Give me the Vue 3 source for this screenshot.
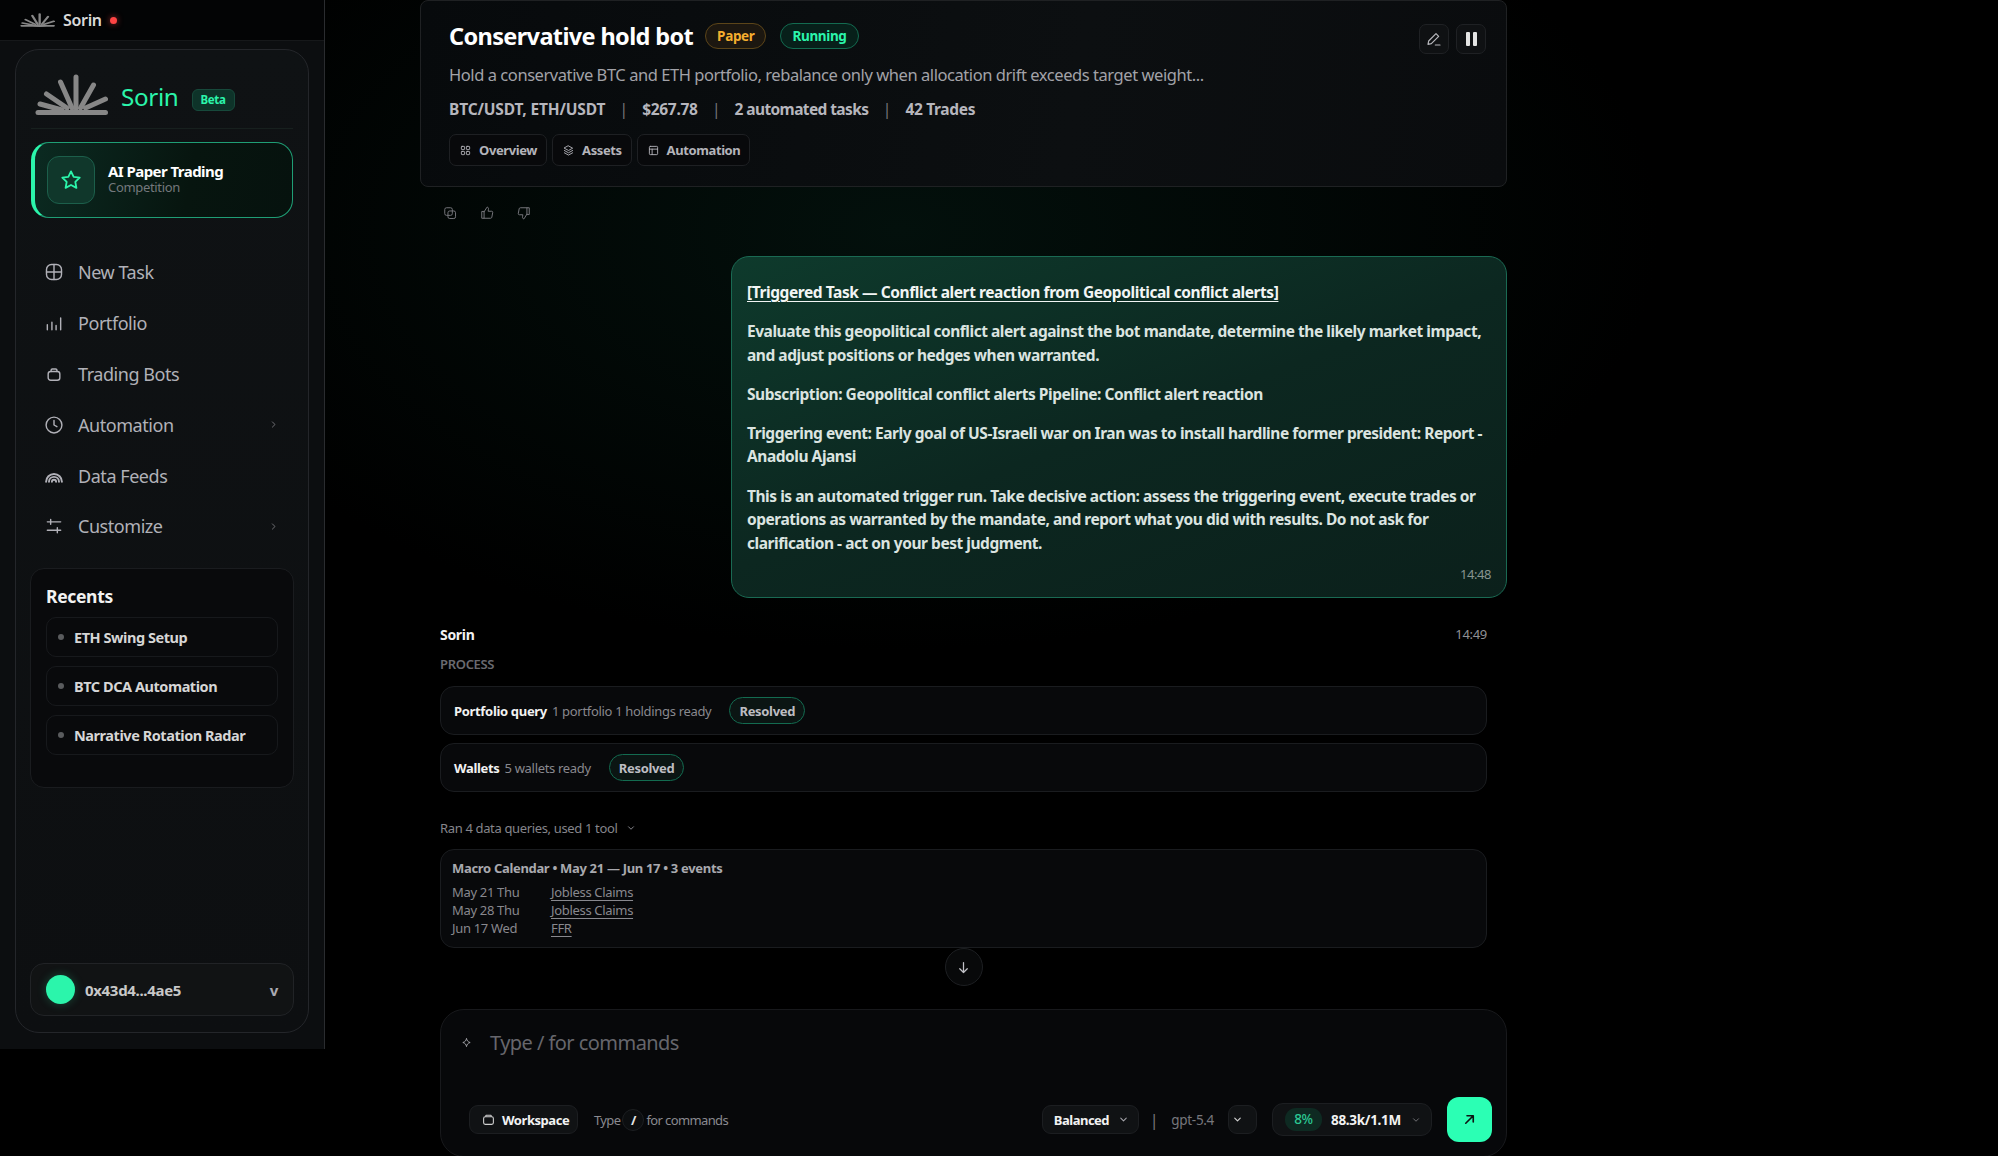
<template>
  <div class="app">
    <aside class="sidebar">
      <div class="topbar">
        <svg class="logo-small" viewBox="0 0 73 42" preserveAspectRatio="none" v-html="logoRays"></svg>
        <span class="topbar-name">Sorin</span>
        <span class="status-dot"></span>
      </div>
      <div class="side-card">
        <div class="brand">
          <svg class="logo" viewBox="0 0 73 42" v-html="logoRays"></svg>
          <span class="brand-name">Sorin</span>
          <span class="beta">Beta</span>
        </div>
        <div class="promo">
          <div class="promo-icon">
            <svg viewBox="0 0 24 24" fill="none" stroke="currentColor" stroke-width="2" stroke-linejoin="round"><path d="M12 2.6l2.9 6 6.6.9-4.8 4.6 1.2 6.5L12 17.5l-5.9 3.1 1.2-6.5L2.500 9.500l6.600-.9z"/></svg>
          </div>
          <div class="promo-text">
            <div class="promo-title">AI Paper Trading</div>
            <div class="promo-sub">Competition</div>
          </div>
        </div>
        <nav class="nav">
          <div v-for="item in navItems" :key="item.label" class="nav-item">
            <svg class="nav-icon" viewBox="0 0 24 24" fill="none" stroke="currentColor" stroke-width="1.7" stroke-linecap="round" stroke-linejoin="round" v-html="item.icon"></svg>
            <span>{{ item.label }}</span>
            <svg v-if="item.arrow" class="nav-arrow" viewBox="0 0 24 24" fill="none" stroke="currentColor" stroke-width="2.4" stroke-linecap="round" stroke-linejoin="round"><path d="M9 5l7 7-7 7"/></svg>
          </div>
        </nav>
        <div class="recents">
          <div class="recents-title">Recents</div>
          <div v-for="r in recents" :key="r" class="recent-item"><i></i>{{ r }}</div>
        </div>
        <div class="wallet">
          <span class="wallet-dot"></span>
          <span class="wallet-addr">0x43d4...4ae5</span>
          <span class="wallet-v">v</span>
        </div>
      </div>
    </aside>

    <main class="main">
      <header class="bot-card">
        <div class="bot-actions">
          <button class="square-btn">
            <svg viewBox="0 0 24 24" fill="none" stroke="currentColor" stroke-width="1.8" stroke-linecap="round" stroke-linejoin="round"><path d="M15 4l4 4L8 19l-5 1 1-5z"/><path d="M14 21h7"/></svg>
          </button>
          <button class="square-btn pause"><i></i><i></i></button>
        </div>
        <div class="bot-title-row">
          <h1>Conservative hold bot</h1>
          <span class="pill paper">Paper</span>
          <span class="pill running">Running</span>
        </div>
        <p class="bot-desc">Hold a conservative BTC and ETH portfolio, rebalance only when allocation drift exceeds target weight...</p>
        <div class="bot-meta">
          <span>BTC/USDT, ETH/USDT</span><b>|</b><span>$267.78</span><b>|</b><span class="meta-tasks">2 automated tasks</span><b>|</b><span>42 Trades</span>
        </div>
        <div class="tabs">
          <div v-for="tab in tabs" :key="tab.label" class="tab">
            <svg viewBox="0 0 24 24" fill="none" stroke="currentColor" stroke-width="2" stroke-linecap="round" stroke-linejoin="round" v-html="tab.icon"></svg>
            {{ tab.label }}
          </div>
        </div>
      </header>

      <div class="msg-actions">
        <svg viewBox="0 0 24 24" fill="none" stroke="currentColor" stroke-width="1.7" stroke-linejoin="round"><rect x="3" y="3" width="13" height="13" rx="3"/><rect x="8.500" y="8.500" width="13" height="13" rx="3"/></svg>
        <svg viewBox="0 0 24 24" fill="none" stroke="currentColor" stroke-width="1.7" stroke-linejoin="round" stroke-linecap="round"><path d="M7 10v11H3V10zM7 10l5-8c2 0 3 1.500 2.500 3.500L14 9h6c1.300 0 2 1 1.800 2.200l-1.500 8c-.2 1-1 1.800-2.100 1.800H7"/></svg>
        <svg viewBox="0 0 24 24" fill="none" stroke="currentColor" stroke-width="1.7" stroke-linejoin="round" stroke-linecap="round"><path d="M17 14V3h4v11zM17 14l-5 8c-2 0-3-1.500-2.500-3.500L10 15H4c-1.300 0-2-1-1.800-2.200l1.500-8C3.900 3.800 4.700 3 5.800 3H17"/></svg>
      </div>

      <section class="user-msg">
        <p class="user-title">[Triggered Task — Conflict alert reaction from Geopolitical conflict alerts]</p>
        <p>Evaluate this geopolitical conflict alert against the bot mandate, determine the likely market impact, and adjust positions or hedges when warranted.</p>
        <p>Subscription: Geopolitical conflict alerts Pipeline: Conflict alert reaction</p>
        <p>Triggering event: Early goal of US-Israeli war on Iran was to install hardline former president: Report - Anadolu Ajansi</p>
        <p>This is an automated trigger run. Take decisive action: assess the triggering event, execute trades or operations as warranted by the mandate, and report what you did with results. Do not ask for clarification - act on your best judgment.</p>
        <div class="user-time">14:48</div>
      </section>

      <section class="reply">
        <div class="reply-head"><strong>Sorin</strong><span>14:49</span></div>
        <div class="process-label">PROCESS</div>
        <div v-for="p in processRows" :key="p.name" class="process-row">
          <strong>{{ p.name }}</strong>
          <span class="process-detail">{{ p.detail }}</span>
          <span class="resolved">Resolved</span>
        </div>
        <div class="ran">
          Ran 4 data queries, used 1 tool
          <svg viewBox="0 0 24 24" fill="none" stroke="currentColor" stroke-width="2.4" stroke-linecap="round" stroke-linejoin="round"><path d="M6 9l6 6 6-6"/></svg>
        </div>
        <div class="macro">
          <div class="macro-title">Macro Calendar • May 21 — Jun 17 • 3 events</div>
          <div v-for="e in events" :key="e.date" class="macro-row">
            <span class="macro-date">{{ e.date }}</span><a>{{ e.name }}</a>
          </div>
        </div>
      </section>

      <div class="scroll-row">
        <button class="scroll-btn">
          <svg viewBox="0 0 24 24" fill="none" stroke="currentColor" stroke-width="2" stroke-linecap="round" stroke-linejoin="round"><path d="M12 4v16M6 14l6 6 6-6"/></svg>
        </button>
      </div>

      <section class="composer">
        <div class="composer-input">
          <svg viewBox="0 0 24 24" fill="none" stroke="currentColor" stroke-width="2" stroke-linejoin="round"><path d="M12 3c.8 5 3.500 8 8 9-4.500 1-7.200 4-8 9-.8-5-3.500-8-8-9 4.500-1 7.200-4 8-9z"/></svg>
          <span>Type / for commands</span>
        </div>
        <div class="composer-bar">
          <div class="chip workspace">
            <svg viewBox="0 0 24 24" fill="none" stroke="currentColor" stroke-width="2" stroke-linejoin="round"><rect x="3" y="7" width="18" height="14" rx="3"/><path d="M7 7V5a1 1 0 0 1 1-1h8a1 1 0 0 1 1 1v2"/></svg>
            Workspace
          </div>
          <span class="hint">Type</span>
          <span class="kbd">/</span>
          <span class="hint">for commands</span>
          <span class="spacer"></span>
          <div class="chip balanced">
            Balanced
            <svg viewBox="0 0 24 24" fill="none" stroke="currentColor" stroke-width="2.2" stroke-linecap="round" stroke-linejoin="round"><path d="M6 9l6 6 6-6"/></svg>
          </div>
          <span class="sep">|</span>
          <span class="model">gpt-5.4</span>
          <div class="chip model-btn">
            <svg viewBox="0 0 24 24" fill="none" stroke="currentColor" stroke-width="2.600" stroke-linecap="round" stroke-linejoin="round"><path d="M6 9l6 6 6-6"/></svg>
          </div>
          <div class="chip tokens">
            <span class="percent">8%</span>
            <span class="token-count">88.3k/1.1M</span>
            <svg viewBox="0 0 24 24" fill="none" stroke="currentColor" stroke-width="2.200" stroke-linecap="round" stroke-linejoin="round"><path d="M6 9l6 6 6-6"/></svg>
          </div>
          <button class="send">
            <svg viewBox="0 0 24 24" fill="none" stroke="currentColor" stroke-width="2.600" stroke-linecap="round" stroke-linejoin="round"><path d="M6 18L18 6M8 6h10v10"/></svg>
          </button>
        </div>
      </section>
    </main>
  </div>
</template>

<script setup>
const logoRays = `
  <path d="M18 36Q41 46 64 36z" fill="#b9b9b9"/>
  <g fill="none" stroke="#878787" stroke-width="5" stroke-linecap="round">
    <path d="M41 3v31"/>
    <path d="M25.500 8l11.500 26"/>
    <path d="M58.500 11l-13 23"/>
    <path d="M11.500 20l20.500 14"/>
    <path d="M70.500 25l-20 9"/>
    <path d="M5 30l22 6"/>
    <path d="M3 38.500h67.500"/>
  </g>`

const navItems = [
  { label: 'New Task', icon: '<rect x="3" y="3" width="18" height="18" rx="6"/><path d="M12 3v18M3 12h18"/>' },
  { label: 'Portfolio', icon: '<path d="M4 14v6M9.500 11v9M14.500 15v5M20 6v14"/>' },
  { label: 'Trading Bots', icon: '<rect x="5" y="9" width="14" height="10.500" rx="3"/><path d="M8.500 9V7.500A1.500 1.500 0 0 1 10 6h4a1.500 1.500 0 0 1 1.500 1.500V9"/>' },
  { label: 'Automation', arrow: true, icon: '<circle cx="12" cy="12" r="9.500"/><path d="M12 6.500V12l3.500 2"/>' },
  { label: 'Data Feeds', icon: '<path stroke-width="2.300" d="M2.500 19a9.500 9.500 0 0 1 19 0M6 19a6 6 0 0 1 12 0M9.500 19a2.500 2.500 0 0 1 5 0"/>' },
  { label: 'Customize', arrow: true, icon: '<path d="M4 7h16M8 4v6M4 17h16M16 14v6"/>' }
]

const recents = ['ETH Swing Setup', 'BTC DCA Automation', 'Narrative Rotation Radar']

const tabs = [
  { label: 'Overview', icon: '<rect x="3" y="3" width="7" height="7" rx="1.500"/><rect x="14" y="3" width="7" height="7" rx="1.500"/><rect x="3" y="14" width="7" height="7" rx="1.500"/><rect x="14" y="14" width="7" height="7" rx="1.500"/>' },
  { label: 'Assets', icon: '<path d="M12 2l9 5-9 5-9-5z"/><path d="M3 12l9 5 9-5M3 17l9 5 9-5"/>' },
  { label: 'Automation', icon: '<rect x="3" y="3" width="18" height="18" rx="2"/><path d="M3 9h18M9 9v12"/>' }
]

const processRows = [
  { name: 'Portfolio query', detail: '1 portfolio 1 holdings ready' },
  { name: 'Wallets', detail: '5 wallets ready' }
]

const events = [
  { date: 'May 21 Thu', name: 'Jobless Claims' },
  { date: 'May 28 Thu', name: 'Jobless Claims' },
  { date: 'Jun 17 Wed', name: 'FFR' }
]
</script>

<style>
html, body {
  margin: 0;
  background: #000;
  overflow: hidden;
}
</style>

<style scoped>
.app {
  display: flex;
  align-items: flex-start;
  height: 1156px;
  overflow: hidden;
  font-family: "Noto Sans", sans-serif;
  letter-spacing: -0.02em;
  color: #e6e6e6;
  background: radial-gradient(ellipse 760px 420px at 900px 230px, #03100c 0%, #000 100%);
}
svg {
  display: block;
  flex-shrink: 0;
}
button {
  font: inherit;
  cursor: pointer;
  padding: 0;
}
p, h1 {
  margin: 0;
}

/* --- Sidebar --- */
.sidebar {
  width: 325px;
  height: 1049px;
  box-sizing: border-box;
  flex-shrink: 0;
  display: flex;
  flex-direction: column;
  background: #0c0e10;
  border-right: 1px solid #2a2c2f;
}
.topbar {
  height: 41px;
  flex-shrink: 0;
  display: flex;
  align-items: center;
  padding-left: 20px;
  background: #030405;
  border-bottom: 1px solid #16181a;
  box-sizing: border-box;
}
.logo-small {
  width: 35px;
  height: 14px;
  margin-right: 8px;
}
.topbar-name {
  font-size: 16px;
  font-weight: 600;
  color: #d9d9d9;
}
.status-dot {
  width: 7px;
  height: 7px;
  margin-left: 8px;
  border-radius: 50%;
  background: #ff4444;
  box-shadow: 0 0 6px rgba(255, 68, 68, 0.6);
}
.side-card {
  margin: 8px 15px 0;
  height: 984px;
  box-sizing: border-box;
  padding: 24px 15px 16px;
  display: flex;
  flex-direction: column;
  border: 1px solid #24262a;
  border-radius: 24px;
  background: linear-gradient(180deg, #0f1214 0%, #0d0f11 100%);
}
.brand {
  display: flex;
  align-items: center;
  height: 55px;
  margin: 0 0 13px;
  padding: 0 0 12px 4px;
  box-sizing: border-box;
  border-bottom: 1px solid #17201e;
}
.logo {
  width: 73px;
  height: 42px;
}
.brand-name {
  margin: 2px 0 0 13px;
  font-size: 24.2px;
  color: #2bf5ab;
}
.beta {
  margin: 10px 0 0 13px;
  padding: 0 8px;
  height: 20px;
  line-height: 20px;
  font-size: 11.500px;
  font-weight: 700;
  color: #2bf5ab;
  background: #0e3329;
  border: 1px solid #17493b;
  border-radius: 6px;
}
.promo {
  height: 76px;
  box-sizing: border-box;
  display: flex;
  align-items: center;
  gap: 13px;
  padding-left: 12px;
  border: 1.5px solid #1f9e75;
  border-left: 4px solid #2bf5ab;
  border-radius: 18px;
  background: linear-gradient(100deg, #0b2a21 0%, #07150f 60%, #06120e 100%);
}
.promo-icon {
  width: 48px;
  height: 48px;
  box-sizing: border-box;
  display: flex;
  align-items: center;
  justify-content: center;
  border: 1px solid #1c5f4b;
  border-radius: 12px;
  background: #10372b;
  color: #2bf5ab;
}
.promo-icon svg {
  width: 22px;
  height: 22px;
}
.promo-text {
  margin-bottom: 2px;
}
.promo-title {
  font-size: 15px;
  line-height: 16px;
  font-weight: 700;
  letter-spacing: -0.55px;
  color: #fff;
}
.promo-sub {
  font-size: 13px;
  line-height: 16px;
  color: #74787c;
}
.nav {
  margin-top: 29px;
}
.nav-item {
  height: 50.800px;
  display: flex;
  align-items: center;
  padding-left: 13px;
  font-size: 18px;
  letter-spacing: -0.45px;
  color: #b1b1b8;
}
.nav-icon {
  width: 20px;
  height: 20px;
  margin-right: 14px;
}
.nav-arrow {
  width: 9px;
  height: 9px;
  margin-left: auto;
  margin-right: 15px;
  color: #77777c;
}
.recents {
  margin: 16px -1px 0;
  height: 220px;
  box-sizing: border-box;
  padding: 15px;
  display: flex;
  flex-direction: column;
  gap: 9px;
  border: 1px solid #1a1c1f;
  border-radius: 14px;
  background: #090a0c;
}
.recents-title {
  font-size: 17.5px;
  line-height: 24px;
  font-weight: 700;
  color: #f2f2f2;
}
.recent-item {
  height: 40px;
  box-sizing: border-box;
  display: flex;
  align-items: center;
  padding-left: 11px;
  font-size: 14.5px;
  letter-spacing: -0.45px;
  font-weight: 700;
  color: #d6d6d6;
  border: 1px solid #17191c;
  border-radius: 10px;
}
.recent-item i {
  width: 6px;
  height: 6px;
  margin-right: 10px;
  border-radius: 50%;
  background: #5a5c5e;
}
.wallet {
  margin: auto -1px 0;
  height: 53px;
  box-sizing: border-box;
  display: flex;
  align-items: center;
  padding: 0 15px;
  border: 1px solid #212326;
  border-radius: 14px;
  background: #111314;
}
.wallet-dot {
  width: 29px;
  height: 29px;
  border-radius: 50%;
  background: #2bf5ab;
  box-shadow: 0 0 10px rgba(43, 245, 171, 0.25);
}
.wallet-addr {
  margin-left: 10px;
  font-size: 15px;
  font-weight: 700;
  color: #c8c8c8;
}
.wallet-v {
  margin-left: auto;
  font-size: 15px;
  font-weight: 700;
  color: #a9a9b2;
}

/* --- Main column --- */
.main {
  width: 1087px;
  margin-left: 95px;
  flex-shrink: 0;
  display: flex;
  flex-direction: column;
}
.bot-card {
  position: relative;
  height: 187px;
  box-sizing: border-box;
  padding: 21px 28px 0;
  border: 1px solid #1f2123;
  border-radius: 8px;
  background: linear-gradient(100deg, #070a0c 0%, #0c0f11 60%, #0a0c0e 100%);
}
.bot-actions {
  position: absolute;
  top: 23px;
  right: 20px;
  display: flex;
  gap: 7px;
}
.square-btn {
  width: 30px;
  height: 30px;
  display: flex;
  align-items: center;
  justify-content: center;
  gap: 3px;
  border: 1px solid #1f2124;
  border-radius: 7px;
  background: #0f1113;
  color: #b8b8bd;
}
.square-btn svg {
  width: 16px;
  height: 16px;
}
.pause i {
  width: 4px;
  height: 14px;
  border-radius: 1px;
  background: #e4e4e4;
}
.bot-title-row {
  display: flex;
  align-items: center;
  height: 27px;
}
.bot-title-row h1 {
  font-size: 23.5px;
  font-weight: 700;
  letter-spacing: -0.63px;
  color: #fff;
}
.pill {
  height: 26px;
  box-sizing: border-box;
  display: flex;
  align-items: center;
  padding: 0 11px;
  font-size: 13.500px;
  font-weight: 700;
  letter-spacing: -0.35px;
  border-radius: 13px;
}
.paper {
  margin-left: 12px;
  color: #f5ae2f;
  background: #1c1710;
  border: 1px solid #5c4519;
}
.running {
  margin-left: 14px;
  color: #2bf5ab;
  background: #07201a;
  border: 1px solid #136b50;
}
.bot-desc {
  margin-top: 14px;
  font-size: 16.5px;
  line-height: 24px;
  letter-spacing: -0.44px;
  color: #a2a2a8;
}
.bot-meta {
  margin-top: 10px;
  display: flex;
  align-items: center;
  height: 24px;
  font-size: 15.5px;
  font-weight: 700;
  color: #b6b6bd;
}
.bot-meta b {
  width: 37px;
  text-align: center;
  font-weight: 400;
  color: #75757a;
}
.bot-meta span:first-child {
  letter-spacing: -0.15px;
}
.meta-tasks {
  letter-spacing: -0.6px;
}
.tabs {
  margin-top: 13px;
  display: flex;
  gap: 5px;
}
.tab {
  height: 32px;
  box-sizing: border-box;
  display: flex;
  align-items: center;
  gap: 8px;
  padding: 0 9px 0 10px;
  font-size: 13px;
  font-weight: 700;
  letter-spacing: -0.4px;
  color: #b4b4ba;
  border: 1px solid #1e2023;
  border-radius: 7px;
  background: #08090b;
}
.tab svg {
  width: 11px;
  height: 11px;
}
.msg-actions {
  display: flex;
  gap: 23px;
  margin: 19px 0 0 23px;
  height: 14px;
  color: #75757b;
}
.msg-actions svg {
  width: 14px;
  height: 14px;
}

/* --- User message --- */
.user-msg {
  margin: 36px 0 0 311px;
  height: 342px;
  box-sizing: border-box;
  padding: 24px 15px 0;
  border: 1px solid #1a6a53;
  border-radius: 18px;
  background: linear-gradient(160deg, #0e3a2c 0%, #0c2720 50%, #0b201b 100%);
  font-size: 15.5px;
  line-height: 23.600px;
  font-weight: 700;
  letter-spacing: -0.46px;
  color: #dbe4e0;
}
.user-msg p {
  margin-bottom: 15.500px;
}
.user-title {
  text-decoration: underline;
  text-underline-offset: 3px;
  letter-spacing: -0.42px;
  color: #f2f5f4;
}
.user-time {
  margin-top: -8px;
  text-align: right;
  font-size: 13px;
  font-weight: 400;
  color: #87948f;
}

/* --- Assistant reply --- */
.reply {
  margin: 24px 20px 0;
}
.reply-head {
  display: flex;
  justify-content: space-between;
  align-items: center;
  height: 24px;
  font-size: 14px;
  color: #f2f2f2;
}
.reply-head span {
  font-size: 13px;
  color: #909095;
}
.process-label {
  margin-top: 7px;
  height: 22px;
  line-height: 22px;
  font-size: 13px;
  font-weight: 600;
  color: #6a6a70;
}
.process-row {
  margin-top: 11px;
  height: 49px;
  box-sizing: border-box;
  display: flex;
  align-items: center;
  padding-left: 13px;
  font-size: 13px;
  border: 1px solid #1a1c1f;
  border-radius: 14px;
  background: #08090b;
}
.process-row strong {
  color: #f2f2f2;
}
.process-detail {
  margin-left: 5px;
  color: #88888e;
}
.resolved {
  margin-left: 18px;
  height: 27px;
  box-sizing: border-box;
  display: flex;
  align-items: center;
  padding: 0 9px;
  font-size: 13px;
  font-weight: 700;
  color: #bdbdc2;
  background: #0b1513;
  border: 1px solid #136b50;
  border-radius: 14px;
}
.process-row + .process-row {
  margin-top: 8px;
}
.ran {
  margin-top: 25px;
  height: 22px;
  display: flex;
  align-items: center;
  gap: 9px;
  font-size: 13px;
  letter-spacing: -0.35px;
  color: #85858b;
}
.ran svg {
  width: 10px;
  height: 10px;
}
.macro {
  margin-top: 10px;
  height: 99px;
  box-sizing: border-box;
  padding: 9px 11px;
  border: 1px solid #1a1c1f;
  border-radius: 14px;
  background: #08090b;
  font-size: 13px;
  line-height: 18px;
  color: #88888e;
}
.macro-title {
  margin-bottom: 6px;
  font-weight: 700;
  color: #a9a9af;
}
.macro-row {
  display: flex;
}
.macro-date {
  width: 99px;
}
.macro-row a {
  text-decoration: underline;
  text-underline-offset: 3px;
}

/* --- Scroll button --- */
.scroll-row {
  margin-left: 20px;
  width: 1047px;
  display: flex;
  justify-content: center;
}
.scroll-btn {
  width: 38px;
  height: 38px;
  display: flex;
  align-items: center;
  justify-content: center;
  border: 1px solid #1d1f22;
  border-radius: 50%;
  background: #08090a;
  color: #c2c2c8;
}
.scroll-btn svg {
  width: 15px;
  height: 15px;
}

/* --- Composer --- */
.composer {
  margin: 23px 0 0 20px;
  height: 148px;
  box-sizing: border-box;
  padding: 21px 14px 0 20px;
  border: 1px solid #18191c;
  border-radius: 24px;
  background: #07080a;
}
.composer-input {
  display: flex;
  align-items: center;
  height: 22px;
  font-size: 20px;
  letter-spacing: -0.55px;
  color: #66666c;
}
.composer-input svg {
  width: 11px;
  height: 11px;
  margin: 0 18px 0 0;
  color: #a6a6ac;
}
.composer-bar {
  margin-top: 44px;
  margin-left: 8px;
  height: 45px;
  display: flex;
  align-items: center;
}
.chip {
  height: 29px;
  box-sizing: border-box;
  display: flex;
  align-items: center;
  border: 1px solid #1c1e21;
  border-radius: 9px;
  background: #101214;
  font-size: 13px;
  font-weight: 700;
  letter-spacing: -0.45px;
  color: #f2f2f2;
}
.workspace {
  width: 109px;
  padding-left: 12px;
  gap: 7px;
  margin-right: 16px;
}
.workspace svg {
  width: 13px;
  height: 13px;
  color: #cfcfcf;
}
.hint {
  font-size: 13px;
  letter-spacing: -0.62px;
  color: #8a8a90;
}
.kbd {
  width: 20px;
  height: 20px;
  margin: 0 2px;
  display: flex;
  align-items: center;
  justify-content: center;
  font-size: 13px;
  font-weight: 700;
  color: #e6e6e6;
  border: 1px solid #1c1e21;
  border-radius: 50%;
  background: #0c0e10;
}
.spacer {
  flex: 1;
}
.balanced {
  width: 97px;
  padding-left: 11px;
  gap: 9px;
  letter-spacing: -0.5px;
}
.balanced svg {
  width: 11px;
  height: 11px;
  color: #a6a6ac;
}
.sep {
  margin-left: 11px;
  font-size: 16px;
  color: #77777c;
}
.model {
  margin-left: 13px;
  font-size: 13.500px;
  color: #77777c;
}
.model-btn {
  width: 29px;
  margin-left: 14px;
  padding-left: 3px;
  color: #cfcfcf;
}
.model-btn svg {
  width: 11px;
  height: 11px;
}
.tokens {
  width: 160px;
  height: 33px;
  margin-left: 15px;
  padding-left: 12px;
  border-radius: 11px;
  font-size: 13.500px;
  letter-spacing: -0.3px;
}
.percent {
  width: 37px;
  height: 23px;
  line-height: 23px;
  text-align: center;
  border-radius: 11px;
  background: #0e2a22;
  color: #2bc893;
  font-weight: 500;
}
.token-count {
  margin-left: 9px;
}
.tokens svg {
  width: 10px;
  height: 10px;
  margin-left: 10px;
  color: #77777c;
}
.send {
  width: 45px;
  height: 45px;
  margin-left: 15px;
  display: flex;
  align-items: center;
  justify-content: center;
  border: none;
  border-radius: 12px;
  background: #2bffb4;
  color: #0d1513;
}
.send svg {
  width: 15px;
  height: 15px;
}
</style>
